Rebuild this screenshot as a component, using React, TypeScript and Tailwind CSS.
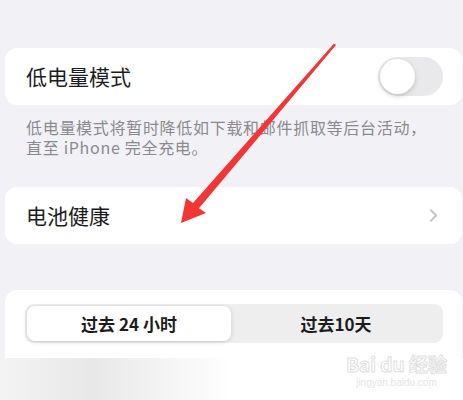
import { ChevronRight } from 'lucide-react';

const cjk = "font-['Noto_Sans_CJK_SC','Noto_Sans',sans-serif]";

export default function BatterySettings() {
  return (
    <div className={`relative w-[463px] h-[400px] overflow-hidden bg-[#f2f2f6] ${cjk}`}>
      <div className="pt-[48px] pl-[5px] pr-[1px]">
        {/* low power mode */}
        <div className="h-[57px] bg-white rounded-[12px] flex items-center justify-between pl-[21px] pr-[19px]">
          <span className="text-[21px] text-[#1c1c1e] leading-none">低电量模式</span>
          <div className="w-[65px] h-[39px] rounded-full bg-[#e9e9eb] flex items-center">
            <div className="w-[35px] h-[35px] ml-[2px] rounded-full bg-white shadow-[0_2px_5px_rgba(0,0,0,0.18)]" />
          </div>
        </div>
        <div className="mt-[12px] pl-[21px] text-[16px] tracking-[0.7px] text-[#8a8a8e] whitespace-nowrap">
          <div className="h-[20px] leading-[20px]">低电量模式将暂时降低如下载和邮件抓取等后台活动，</div>
          <div className="h-[20px] leading-[20px]">直至 iPhone 完全充电。</div>
        </div>

        {/* battery health */}
        <div className="mt-[30px] h-[57px] bg-white rounded-[12px] flex items-center justify-between pl-[21px] pr-[18px]">
          <span className="text-[21px] text-[#1c1c1e] leading-none">电池健康</span>
          <ChevronRight className="w-[21px] h-[21px] text-[#c4c4c7]" strokeWidth={2.2} />
        </div>

        {/* usage range */}
        <div className="mt-[46px] bg-white rounded-t-[12px] pt-[14px] pb-[15px] pl-[20px] pr-[19px]">
          <div className="h-[39px] rounded-[9px] bg-[#eeeeef] grid grid-cols-[204px_1fr] p-[2px]">
            <div className="rounded-[8px] bg-white shadow-[0_1px_4px_rgba(0,0,0,0.16)] flex items-center justify-center text-[17px] font-semibold text-[#1c1c1e]">
              过去 24 小时
            </div>
            <div className="flex items-center justify-center text-[17px] font-semibold text-[#1c1c1e]">
              过去10天
            </div>
          </div>
        </div>
      </div>
      <div className="h-[42px] bg-gradient-to-r from-[#f3f3f3] via-[#e8e8e9] via-20% to-white to-50%" />

      {/* watermark */}
      <div className="absolute left-[346px] top-[354px] flex flex-col items-center pointer-events-none whitespace-nowrap">
        <span className="text-[19px] font-bold text-white [-webkit-text-stroke:1px_#e0e0e0] leading-none">Bai du 经验</span>
        <span className="mt-[5px] text-[10px] leading-none text-[#e4e4e4] font-['Liberation_Sans',sans-serif]">jingyan.baidu.com</span>
      </div>

      {/* red arrow */}
      <svg className="absolute inset-0 pointer-events-none" width="463" height="400" viewBox="0 0 463 400">
        <polygon
          points="334,43.5 336,45 199,208.2 206,213 181,223 186,198 193,203"
          fill="#f23636"
        />
      </svg>
    </div>
  );
}
